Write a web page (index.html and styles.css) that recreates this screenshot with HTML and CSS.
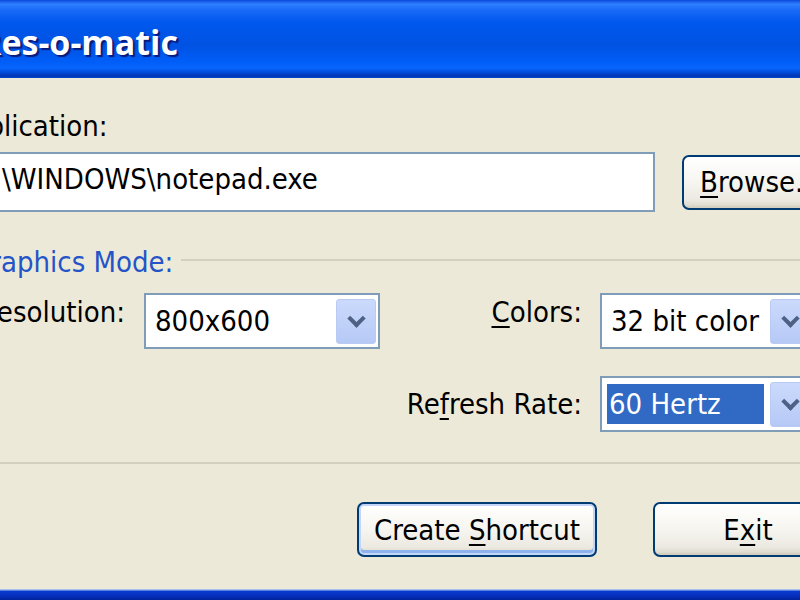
FILE: index.html
```html
<!DOCTYPE html>
<html lang="en">

<head>
    <meta charset="UTF-8">
    <title>Res-o-matic</title>
    <link rel="stylesheet" href="styles.css">
</head>

<body>
    <div class="window">
        <div class="titlebar">
            <span class="title">Res-o-matic</span>
        </div>

        <div class="client">
            <div class="field-label">Application:</div>

            <div class="path-row">
                <div class="textbox">C:\WINDOWS\notepad.exe</div>
                <button class="btn btn-browse"><u>B</u>rowse...</button>
            </div>

            <div class="group">
                <div class="group-head">
                    <span>Graphics Mode:</span>
                    <div class="group-line"></div>
                </div>

                <div class="group-body">
                    <div class="lbl lbl-left lbl-raised"><u>R</u>esolution:</div>
                    <div class="combo">
                        <span class="combo-text">800x600</span>
                        <span class="combo-btn"></span>
                    </div>
                    <div class="lbl lbl-raised"><u>C</u>olors:</div>
                    <div class="combo">
                        <span class="combo-text">32 bit color</span>
                        <span class="combo-btn"></span>
                    </div>

                    <div></div>
                    <div></div>
                    <div class="lbl">Re<u>f</u>resh Rate:</div>
                    <div class="combo">
                        <span class="combo-text selected">60 Hertz</span>
                        <span class="combo-btn"></span>
                    </div>
                </div>
            </div>

            <div class="actions">
                <button class="btn btn-default">Create <u>S</u>hortcut</button>
                <button class="btn">E<u>x</u>it</button>
            </div>
        </div>
        <div class="frame-bottom"></div>
    </div>
</body>

</html>
```

FILE: styles.css
```css
* {
    margin: 0;
    padding: 0;
    box-sizing: border-box;
}

html,
body {
    width: 800px;
    height: 600px;
    overflow: hidden;
}

body {
    background-color: #ece9d8;
    font-family: "DejaVu Sans", sans-serif;
    font-stretch: condensed;
    font-size: 29px;
    line-height: 34px;
    color: #000;
}

.window {
    width: 960px;
    height: 600px;
    margin-left: -60px;
    background-color: #ece9d8;
    display: flex;
    flex-direction: column;
}

.titlebar {
    height: 78px;
    padding-left: 39px;
    display: flex;
    align-items: center;
    background: linear-gradient(to bottom,
            #0a48d8 0,
            #2f7fff 4px,
            #1a6af8 10px,
            #0058ee 22px,
            #0052e2 45px,
            #005ef8 62px,
            #0866ff 68px,
            #0048d2 73px,
            #0036b0 76px,
            #0046d0 78px);
}

.title {
    font-family: "Open Sans", "DejaVu Sans", sans-serif;
    font-stretch: normal;
    font-weight: 700;
    font-size: 34px;
    color: #fff;
    text-shadow: 2px 2px 1px #0a1a7a;
    margin-top: 6px;
}

.client {
    height: 511px;
    padding: 31px 30px 0 25px;
    display: flex;
    flex-direction: column;
}

.frame-bottom {
    height: 11px;
    background: linear-gradient(to bottom, #a9c2f2 0, #a9c2f2 1px, #0a3ad0 2px, #0830c0 6px, #00229e 11px);
}

.field-label {
    margin-left: -12px;
}

.path-row {
    display: flex;
    align-items: center;
    gap: 27px;
    margin-top: 9px;
}

.textbox {
    width: 690px;
    height: 60px;
    background-color: #fff;
    border: 2px solid #7f9db9;
    padding: 8px 0 0 8px;
    white-space: nowrap;
}

.btn {
    font: inherit;
    font-stretch: condensed;
    color: #000;
    width: 190px;
    height: 55px;
    border: 2px solid #003c74;
    border-radius: 7px;
    background: linear-gradient(to bottom, #fff 0, #f6f5f0 50%, #ebe9e0 85%, #d8d3c6 100%);
    box-shadow: inset -1px -2px 0 #d6d0c0;
}

.btn-browse {
    width: 156px;
}

.btn u {
    text-underline-offset: 4px;
    text-decoration-thickness: 2px;
}

.btn-default {
    width: 240px;
    box-shadow: inset 0 0 0 2px #c3d5f8, inset 0 -3px 0 2px #8db2ec;
}

.group {
    margin: 33px 0 0 7px;
    border-bottom: 2px solid #d4d0c0;
    padding: 0 0 30px 8px;
}

.group-head {
    display: flex;
    align-items: center;
    gap: 8px;
    color: #2454c8;
    margin-left: -10px;
}

.group-line {
    flex: 1;
    height: 2px;
    margin-top: -4px;
    background-color: #d4d0c0;
}

.group-body {
    display: grid;
    grid-template-columns: 164px 236px 220px 214px;
    grid-auto-rows: 56px;
    row-gap: 27px;
    align-items: center;
    margin-top: 14px;
}

.lbl {
    text-align: right;
    padding-right: 18px;
    white-space: nowrap;
}

.lbl-left {
    text-align: left;
}

.lbl-raised {
    align-self: start;
    margin-top: 2px;
}

.lbl u {
    text-underline-offset: 4px;
    text-decoration-thickness: 2px;
}

.combo {
    height: 56px;
    background-color: #fff;
    border: 2px solid #7f9db9;
    display: flex;
    align-items: center;
    justify-content: space-between;
    padding: 0 2px 0 5px;
}

.combo-text {
    padding: 3px 4px;
    white-space: nowrap;
}

.combo-text.selected {
    background-color: #316ac5;
    color: #fff;
    width: 157px;
    padding: 3px 0 3px 2px;
}

.combo-btn {
    width: 40px;
    height: 45px;
    border: 1px solid #b9cbf3;
    border-radius: 3px;
    background: linear-gradient(to bottom, #cbdafc, #b6c9f6);
    position: relative;
}

.combo-btn::after {
    content: "";
    position: absolute;
    left: 13px;
    top: 12px;
    width: 9px;
    height: 9px;
    border-right: 4px solid #4d6185;
    border-bottom: 4px solid #4d6185;
    transform: rotate(45deg);
}

.actions {
    display: flex;
    justify-content: flex-end;
    gap: 56px;
    margin-top: 38px;
    padding-right: 27px;
}
```
